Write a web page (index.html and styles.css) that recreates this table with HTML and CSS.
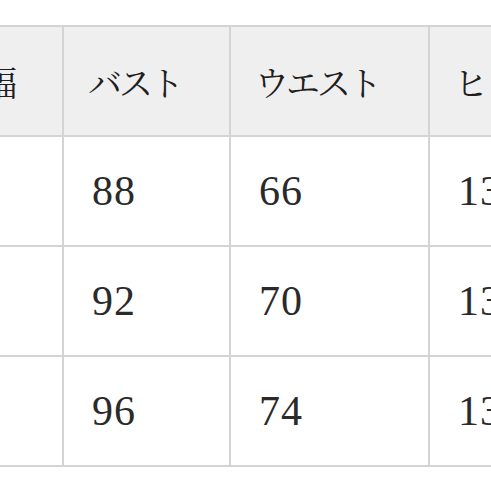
FILE: index.html
```html
<!DOCTYPE html>
<html lang="ja">
<head>
<meta charset="utf-8">
<link rel="stylesheet" href="styles.css">
</head>
<body>
<div class="size-table">
  <div class="cell head jp">肩幅</div>
  <div class="cell head jp">バスト</div>
  <div class="cell head jp">ウエスト</div>
  <div class="cell head jp">ヒップ</div>

  <div class="cell num">36</div>
  <div class="cell num">88</div>
  <div class="cell num">66</div>
  <div class="cell num">130</div>

  <div class="cell num">37</div>
  <div class="cell num">92</div>
  <div class="cell num">70</div>
  <div class="cell num">134</div>

  <div class="cell num">38</div>
  <div class="cell num">96</div>
  <div class="cell num">74</div>
  <div class="cell num">138</div>
</div>
</body>
</html>
```

FILE: styles.css
```css
html, body {
  margin: 0;
  padding: 0;
  background: #ffffff;
  overflow: hidden;
}

.size-table {
  display: grid;
  grid-template-columns: 134px 165px 197px 200px;
  grid-auto-rows: 108px;
  gap: 2px;
  padding: 2px;
  background: #d4d4d4;
  width: max-content;
  margin-top: 25px;
  margin-left: -74px;
}

.cell {
  background: #ffffff;
  display: flex;
  align-items: center;
  padding-left: 28px;
  color: #1e1e1e;
  white-space: nowrap;
  overflow: hidden;
}

.head {
  background: #efefef;
  padding-left: 24px;
}

.jp {
  font-family: "Noto Serif CJK JP", "Noto Sans CJK JP", serif;
  font-size: 34px;
  font-weight: 400;
  letter-spacing: -3px;
}

.num {
  font-family: "Liberation Serif", "Times New Roman", serif;
  font-size: 42px;
  letter-spacing: 1px;
  font-weight: 400;
  color: #2a2a2a;
}
```
